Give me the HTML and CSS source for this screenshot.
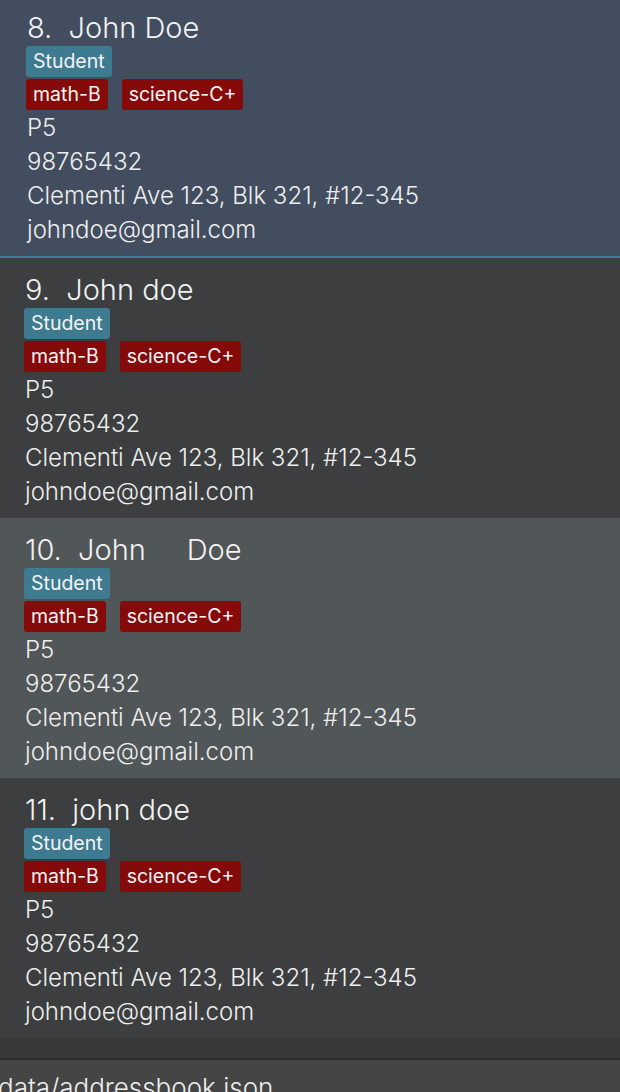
FILE: index.html
```html
<!DOCTYPE html>
<html>
<head>
<meta charset="utf-8">
<link rel="stylesheet" href="styles.css">
</head>
<body>
<div class="list">
  <div class="card selected">
    <div class="name">8.&nbsp; John Doe</div>
    <div class="tags"><span class="tag role">Student</span></div>
    <div class="tags"><span class="tag grade">math-B</span><span class="tag grade">science-C+</span></div>
    <div class="line">P5</div>
    <div class="line">98765432</div>
    <div class="line">Clementi Ave 123, Blk 321, #12-345</div>
    <div class="line">johndoe@gmail.com</div>
  </div>
  <div class="card even">
    <div class="name">9.&nbsp; John doe</div>
    <div class="tags"><span class="tag role">Student</span></div>
    <div class="tags"><span class="tag grade">math-B</span><span class="tag grade">science-C+</span></div>
    <div class="line">P5</div>
    <div class="line">98765432</div>
    <div class="line">Clementi Ave 123, Blk 321, #12-345</div>
    <div class="line">johndoe@gmail.com</div>
  </div>
  <div class="card odd">
    <div class="name">10.&nbsp; John &nbsp;&nbsp;&nbsp; Doe</div>
    <div class="tags"><span class="tag role">Student</span></div>
    <div class="tags"><span class="tag grade">math-B</span><span class="tag grade">science-C+</span></div>
    <div class="line">P5</div>
    <div class="line">98765432</div>
    <div class="line">Clementi Ave 123, Blk 321, #12-345</div>
    <div class="line">johndoe@gmail.com</div>
  </div>
  <div class="card even">
    <div class="name">11.&nbsp; john doe</div>
    <div class="tags"><span class="tag role">Student</span></div>
    <div class="tags"><span class="tag grade">math-B</span><span class="tag grade">science-C+</span></div>
    <div class="line">P5</div>
    <div class="line">98765432</div>
    <div class="line">Clementi Ave 123, Blk 321, #12-345</div>
    <div class="line">johndoe@gmail.com</div>
  </div>
</div>
<div class="gap"></div>
<div class="status">data/addressbook.json</div>
</body>
</html>
```

FILE: styles.css
```css
html, body {
  margin: 0;
  padding: 0;
  background: #383838;
  overflow: hidden;
  font-family: "Inter", "Open Sans", sans-serif;
  color: #eeeeee;
}
.list {
  display: flex;
  flex-direction: column;
}
.card {
  height: 260px;
  box-sizing: border-box;
  padding: 10px 0 10px 25px;
  display: flex;
  flex-direction: column;
}
.card.selected {
  background: #424e60;
  margin-top: -4px;
  height: 262px;
  padding-left: 27px;
  border-bottom: 2px solid #3e7b91;
}
.card.even { background: #3c3e3f; }
.card.odd { background: #515658; }
.name {
  height: 40px;
  line-height: 44px;
  font-size: 29px;
  font-weight: 300;
  color: #f2f2f2;
  white-space: pre;
}
.tags {
  display: flex;
  gap: 14px;
  height: 31px;
}
.tags + .tags { margin-top: 2px; }
.tag {
  height: 31px;
  line-height: 31px;
  padding: 0 7px;
  border-radius: 3px;
  font-size: 19.5px;
  color: #f4f4f4;
}
.card .tag:first-child { margin-left: -1px; }
.role { background: #3e7b91; }
.grade { background: #850a0a; }
.line {
  height: 34px;
  line-height: 36px;
  font-size: 24px;
  font-weight: 300;
  white-space: nowrap;
}
.gap {
  height: 20px;
  background: #383838;
}
.status {
  border-top: 2px solid #2a2a2a;
  background: #454545;
  height: 40px;
  font-size: 26px;
  font-weight: 300;
  line-height: 40px;
  padding-top: 8px;
  text-indent: -2px;
  white-space: nowrap;
}
```
